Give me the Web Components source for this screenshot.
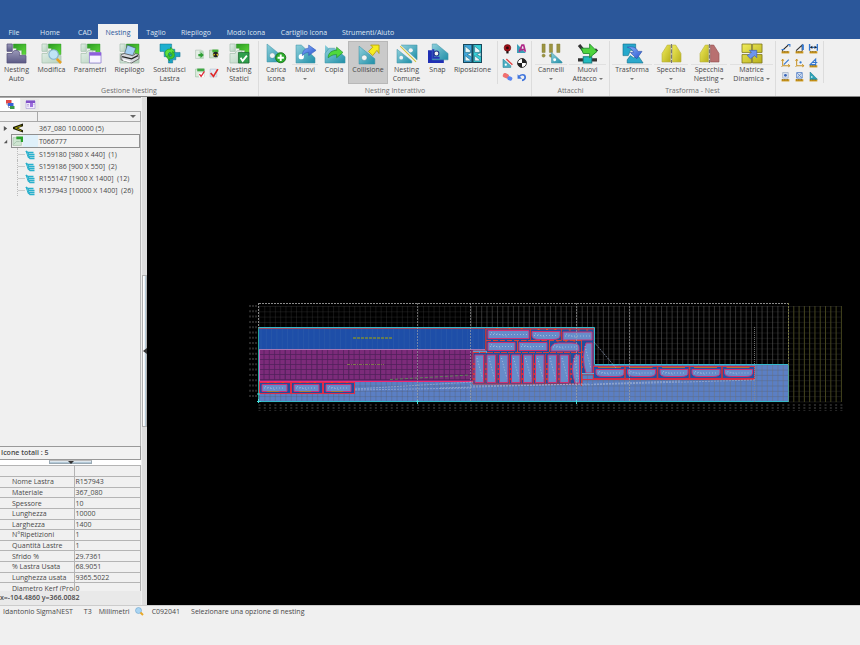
<!DOCTYPE html>
<html lang="it">
<head>
<meta charset="utf-8">
<title>SigmaNEST</title>
<style>
html,body{margin:0;height:100%}
body{font-family:"Open Sans","Noto Sans",sans-serif;font-size:7px;line-height:9px;color:#484848;background:#f0f0f0;overflow:hidden}
</style>
</head>
<body>
<nest-app></nest-app>
<script>
const define=(name,render)=>customElements.define(name,class extends HTMLElement{
  connectedCallback(){
    if(this.shadowRoot)return;
    this.attachShadow({mode:'open'});
    const t=document.createElement('template');
    t.innerHTML='<style>*{box-sizing:border-box}button,select{font:inherit;color:inherit;border:0;background:none;padding:0;margin:0}</style>'+render(this);
    this.shadowRoot.append(t.content.cloneNode(true));
  }
});

const defs=`<defs>
<linearGradient id="g" x1="0" y1="0" x2="1" y2="1"><stop stop-color="#2a9a22"/><stop offset="1" stop-color="#62dc3c"/></linearGradient>
<linearGradient id="t" x1="0" y1="0" x2="1" y2="1"><stop stop-color="#8fd0dc"/><stop offset="1" stop-color="#1f8fa8"/></linearGradient>
<linearGradient id="p" x1="0" y1="0" x2="0" y2="1"><stop stop-color="#9a98b8"/><stop offset="1" stop-color="#5c5a86"/></linearGradient>
<linearGradient id="l" x1="0" y1="0" x2="1" y2="1"><stop stop-color="#e4f0e8"/><stop offset="1" stop-color="#b6d2be"/></linearGradient>
<linearGradient id="y" x1="0" y1="0" x2="1" y2="1"><stop stop-color="#f0ec5c"/><stop offset="1" stop-color="#b8b01c"/></linearGradient>
<linearGradient id="b" x1="0" y1="0" x2="1" y2="1"><stop stop-color="#8ab4ff"/><stop offset="1" stop-color="#2a55cc"/></linearGradient></defs>`;
const plate=(f,s)=>`<path d="M6 0h12v10h-4V6H9V4H6z" fill="url(#g)" stroke="#2c8f26" stroke-width=".4"/><g fill="url(#${f})" stroke="${s}" stroke-width=".7"><path d="M0 0h5v7H0z"/><path d="M0 9h5c0-4 7-4 7 0v2h6v7H0z"/></g>`;
const tri=(x=0,y=0)=>`<g transform="translate(${x} ${y})"><path d="M0 0l15 12v5H0z" fill="url(#t)" stroke="#3d93a6" stroke-width=".5"/><circle cx="5" cy="11" r="2.6" fill="#f4f4f4" stroke="#2a7c90" stroke-width=".4"/></g>`;
const ruler='<path d="M1 13h14v4H1z" fill="#d09a1c"/><path d="M3 13v2M6 13v2M9 13v2M12 13v2" stroke="#3b2c08"/>';
const axes='<path d="M3 2v12h13M1 5l2-3 2 3M13 11l3 3-3 2M3 14l-2 2" fill="none" stroke="#c89224" stroke-width="1.8"/>';
const half='<path d="M0 9l5-8h3v16H0z" fill="url(#y)" stroke="#b9b240" stroke-width=".6"/><path d="M9 0v18" stroke="#777" stroke-width="1.2" stroke-dasharray="4 1"/>';
const icons={
 auto:plate('p','#55527c'),
 modifica:plate('l','#a8c2b0')+'<circle cx="11" cy="10" r="4.5" fill="#bfe4f6" stroke="#83b2cc"/><path d="M14 14l4 4" stroke="#e8a020" stroke-width="2.4"/>',
 parametri:plate('l','#a8c2b0')+'<path d="M8 8h11v10H8z" fill="#f7f4ff" stroke="#8c78d0" stroke-width=".7"/><path d="M8 8h11v3H8z" fill="#8e5fdc"/>',
 riepilogo:plate('l','#a8c2b0')+'<path d="M4 10L7 1l8 3-3 7z" fill="#a4d0f4" stroke="#456" stroke-width=".6"/><path d="M1 10l3-1 8 2 3-2 3 1v4l-7 4-10-3z" fill="#d6d8de" stroke="#555" stroke-width=".8"/><path d="M2 12l9 2 6-3" stroke="#222" fill="none" stroke-width="1.2"/><path d="M3 15l7 2" stroke="#fff" stroke-width="1.5"/>',
 sost:'<path d="M0 0h11v5h3v5H8v2H4V7H0z" fill="#1fb0cf" stroke="#12728c" stroke-width=".5"/><path d="M8 8h11v4h-4v3h-3v3H8z" fill="#1ba2c4" stroke="#12728c" stroke-width=".5"/><path d="M6 12c-3-4 0-8 4-7V3l4 4-4 3V8c-2 0-3 2-1 4z" fill="#5ee03c" stroke="#1d8a1a" stroke-width=".5"/><path d="M12 7c4 3 1 8-3 7v2l-3-4 3-2v2c2 0 3-1 2-3z" fill="#3ec42c" stroke="#1d8a1a" stroke-width=".4"/>',
 statici:plate('l','#a8c2b0')+'<path d="M8 8h10v10H8z" fill="#2f9e4c" stroke="#17662c" stroke-width=".7"/><path d="M10 13l2 3 4-5" fill="none" stroke="#fff" stroke-width="1.7"/>',
 carica:tri()+'<circle cx="13" cy="13" r="4.8" fill="#2cae2c" stroke="#126812" stroke-width=".8"/><path d="M13 10v6M10 13h6" stroke="#fff" stroke-width="1.8"/>',
 muovi:'<path d="M0 1h5l13 12v5H0z" fill="url(#t)" stroke="#3d93a6" stroke-width=".5"/><circle cx="5" cy="12" r="2.5" fill="#fff"/><path d="M6 11c0-5 3-7 6-7V1l7 5-7 5V8c-3 0-4 1-6 3z" fill="url(#b)" stroke="#3760b8" stroke-width=".6"/>',
 copia:'<path d="M0 1l9 8v7H0z" fill="url(#t)"/><path d="M4 4h5l10 8v6H0V9z" fill="url(#t)" stroke="#3d93a6" stroke-width=".5"/><path d="M3 13c0-5 4-7 8-7V3l6 5-6 5v-3c-4 0-5 1-8 3z" fill="#4fd93c" stroke="#1e8c28" stroke-width=".6"/>',
 collisione:tri(0,2)+'<path d="M9 7l4-4-2-2h8v8l-2-3-4 5z" fill="#f6ec20" stroke="#b4a010" stroke-width=".8"/>',
 comune:'<path d="M0 5l14 11v2H0z" fill="url(#t)" stroke="#3d93a6" stroke-width=".5"/><path d="M4 1h15v14z" fill="url(#t)" stroke="#3d93a6" stroke-width=".5"/><path d="M3 2l15 15" stroke="#d2c63a" stroke-width="1"/><circle cx="13" cy="6" r="2" fill="#f4f4f4"/><circle cx="4" cy="13" r="1.8" fill="#f4f4f4"/>',
 snap:'<path d="M0 6h4v6h11v6H0z" fill="#1f2fb4"/><path d="M4 0h4l11 9v6H4z" fill="url(#t)" stroke="#3d93a6" stroke-width=".5"/><path d="M5 5v8h6" fill="none" stroke="#2536b8" stroke-width="2"/><circle cx="8" cy="9" r="2.3" fill="#f4f4f4" stroke="#238"/>',
 riposizione:'<path d="M0 0h18v18H0z" fill="#18485c"/><path d="M1 1h7v16H1z" fill="#40a6dc"/><path d="M10 1h7v16h-7z" fill="#36d0d6"/><path d="M2 2l5 4v2H2zM2 11l5 4v1H2zM11 2l5 4v2h-5zM11 11l5 4v1h-5zM4 10l4-2v4zM13 10l4-2v4z" fill="#eaf8fa" stroke="#1a6c84" stroke-width=".6"/>',
 cannelli:'<g fill="#9c9440" stroke="#7c7630" stroke-width=".4"><path d="M0 0h3v8H0zM7 0h3v8H7zM14 0h3v8h-3z"/><circle cx="1.5" cy="11" r="1.5"/><circle cx="8.5" cy="11" r="1.5"/></g><path d="M9 8l10 9v1H9z" fill="url(#t)" stroke="#3d93a6" stroke-width=".5"/><circle cx="12" cy="15" r="1.4" fill="#fff"/>',
 attacco:'<path d="M1 1l5 6M18 5l-4 4M0 15h5M13 15h5" stroke="#333" stroke-width="3"/><path d="M5 12h8v6H5z" fill="#22bcc0" stroke="#187c80"/><path d="M3 4h8V0l7 7-7 6v-4H5z" fill="#4fd43e" stroke="#1d8a2a" stroke-width=".8"/>',
 trasforma:'<path d="M0 0h12v6H7l-2 5H0z" fill="#25a8cc" stroke="#14708c" stroke-width=".6"/><path d="M4 18v-3l3-4 3 2 5-1 4 6z" fill="#2ba8cc" stroke="#14708c" stroke-width=".6"/><path d="M4 3c7-1 9 1 10 4h4l-5 7-6-6h3c-1-3-3-4-6-5z" fill="url(#b)" stroke="#2d50a8" stroke-width=".6"/>',
 specchia:half+'<path d="M18 9l-5-8h-3v16h8z" fill="url(#y)" stroke="#b9b240" stroke-width=".6"/>',
 spnest:half+'<path d="M18 9l-5-8h-3v16h8z" fill="#b87070" stroke="#935050" stroke-width=".6"/>',
 matrice:'<g fill="url(#y)" stroke="#77701a" stroke-width=".7"><path d="M0 0h9v8H0zM10 0h9v8h-9zM0 10h9v8H0zM10 10h9v8h-9z"/></g><path d="M5 11l4-3-2-2h7v7l-2-2-4 3z" fill="#6d94ee" stroke="#3b5cb8" stroke-width=".6"/>',
 export:'<path d="M1 2h10l4 3v12H1z" fill="#e2ede4" stroke="#a9bcae"/><path d="M8 3h7v14H8z" fill="#b8dabc"/><path d="M6 9h4V6l6 5-6 5v-3H6z" fill="#2f9e34"/>',
 burn:'<path d="M1 2h14v14H1z" fill="#cce3c8" stroke="#8eaa8c"/><path d="M6 1h11v5H6z" fill="#3fae34"/><circle cx="12" cy="10" r="5" fill="#222"/><path d="M8 8l3 2-3 3zM16 8l-3 2 3 3z" fill="#f0da24"/>',
 verify:'<path d="M1 2h15v14H1z" fill="#dcebdd" stroke="#8eb894"/><path d="M4 1h13v5H4z" fill="#40a844"/><path d="M7 9h9v8H7z" fill="#fff"/><path d="M8 11l3 4 6-9" fill="none" stroke="#e02838" stroke-width="2.2"/>',
 check:'<path d="M2 2h12v14H2z" fill="#dfe8f2" stroke="#aab8cc"/><path d="M3 9l5 6 8-13" fill="none" stroke="#e02828" stroke-width="3"/>',
 rosette:'<path d="M8 8v9" stroke="#111" stroke-width="4"/><circle cx="8" cy="7" r="6" fill="#a41018" stroke="#580a0c"/><circle cx="8" cy="7" r="2.5" fill="#2c0808"/>',
 text:'<path d="M0 0v16h16z" fill="#3aa0b8"/><path d="M4 14L9 2h3l3 12M7 10h7" fill="none" stroke="#b02888" stroke-width="3"/>',
 edit:'<path d="M0 2l14 12v3H0z" fill="#4eb0c4" stroke="#237c94"/><circle cx="5" cy="12" r="2" fill="#fff"/><path d="M6 2l11 10" stroke="#e04444" stroke-width="2.5"/>',
 target:'<circle cx="9" cy="9" r="8" fill="#fff" stroke="#222" stroke-width="1.6"/><path d="M9 9V1a8 8 0 018 8zM9 9v8a8 8 0 01-8-8z" fill="#222"/>',
 erase:'<rect x="0" y="3" width="11" height="8" rx="3" fill="#f07070" transform="rotate(25 6 6)"/><rect x="8" y="8" width="9" height="7" rx="3" fill="#5a86f0" transform="rotate(25 12 11)"/>',
 undo:'<path d="M9 15c8-1 7-10 1-10-3 0-4 1-6 3" fill="none" stroke="#3f74dc" stroke-width="3"/><path d="M1 4v8h8z" fill="#3f74dc"/>',
 m1:ruler+'<path d="M2 12L13 2" stroke="#222" stroke-width="2"/><path d="M12 1h4v4M1 10h5" fill="none" stroke="#3478d0" stroke-width="2"/>',
 m2:ruler+'<path d="M2 12L13 2v10" fill="none" stroke="#333" stroke-width="2"/><path d="M12 1h4v10h-3z" fill="#3478d0"/>',
 m3:ruler+'<path d="M1 0v12M15 0v12M2 6h12" stroke="#3478d0" stroke-width="2.4"/><path d="M2 6l4-3v6zM14 6l-4-3v6z" fill="#222"/>',
 m4:axes+'<path d="M5 12L14 3" stroke="#3478d0" stroke-width="2"/>',
 m5:axes+'<circle cx="10" cy="8" r="2" fill="#3478d0"/>',
 m6:ruler+'<path d="M2 12L12 2v10zM7 8h8" fill="none" stroke="#3478d0" stroke-width="2"/>',
 m7:ruler+'<path d="M3 1h10v10H3z" fill="#dde6f2" stroke="#8898b0"/><circle cx="8" cy="6" r="2.5" fill="#3a66b8"/>',
 m8:ruler+'<path d="M3 1h10v10H3zM4 2l8 8M12 2l-8 8" fill="#dde6f2" stroke="#4878c4" stroke-width="1.4"/>',
 m9:ruler+'<path d="M2 0l13 13H2z" fill="#2ba4b8" stroke="#16788c"/><circle cx="5" cy="9" r="1.5" fill="#fff"/>',
 layers:'<path d="M0 0h11v7H0z" fill="#e04848"/><path d="M4 6h11v6H4z" fill="#3a62d8"/><path d="M8 12h9v6H8z" fill="#3c9c4c"/><path d="M2 7v3h2M5 12v3h3" fill="none" stroke="#447"/>',
 form:'<path d="M0 2h18v15H0z" fill="#efeafc" stroke="#9a86d0"/><path d="M0 1h18v5H0z" fill="#8050c8"/><path d="M8 6l6 0v8H8z" fill="#9b6cdc"/><path d="M2 9h4M2 12h4M15 9h2" stroke="#8a70b8"/>',
 material:'<path d="M18 1v5l-9 3 9 4v4L0 11V7z" fill="#1d1d06"/><path d="M15 5L4 9l11 5" fill="none" stroke="#a8a400" stroke-width="1.6"/>',
 task:'<path d="M0 3h15v14H0z" fill="#cfe6d2" stroke="#9ab8a0"/><path d="M6 1h12v10h-4V6H6z" fill="#2ba32c"/><path d="M1 15l5-5h6" stroke="#8fae96" fill="none"/>',
 sheet:'<path d="M1 2l4 3h11M4 6l3 3h11M4 10l3 3h11M6 14l3 3h9" fill="none" stroke="#28b0cc" stroke-width="2.6"/><path d="M1 2l5 14" stroke="#28b0cc" stroke-width="2"/>',
 lens:'<circle cx="7" cy="7" r="6" fill="#a9d4f2" stroke="#5d98c4"/><path d="M11 11l5 5" stroke="#e8a828" stroke-width="4"/>'
};

define('nest-icon',e=>`<style>:host{display:block;width:18px;height:18px;flex:none}svg{display:block;width:100%;height:100%;overflow:visible}</style><svg viewBox="0 0 18 18" aria-hidden="true">${defs}${icons[e.getAttribute('name')]}</svg>`);

define('ribbon-tabs',()=>`<style>:host{display:block;background:#2b579a;color:#dfe7f3;padding-top:24px}
nav{display:flex;height:15px}button{width:var(--w);height:15px;flex:none;line-height:17px;white-space:nowrap}
button[aria-selected=true]{background:#f0f0f0;color:#2b579a}</style>
<nav role="tablist">${[['File',28],['Home',44],['CAD',26],['Nesting',40],['Taglio',36],['Riepilogo',44],['Modo Icona',56],['Cartiglio Icona',60],['Strumenti/Aiuto',68]].map(([t,w])=>`<button role="tab" aria-selected="${t=='Nesting'}" style="--w:${w}px">${t}</button>`).join('')}</nav>`);

define('ribbon-group',e=>`<style>:host{display:flex;flex-direction:column;height:55px;border-right:1px solid #dcdcdc;flex:none}
div{display:flex;flex:1;padding:0 var(--pr,2px) 0 var(--pl,3px)}footer{text-align:center;color:#6e6e6e;line-height:9px;height:11px;padding-top:1px}</style>
<div><slot></slot></div><footer>${e.getAttribute('label')||''}</footer>`);

define('ribbon-button',e=>`<style>:host{display:block;flex:none;height:43px}
button{display:flex;flex-direction:column;align-items:center;width:100%;height:100%;padding-top:2px;border:1px solid transparent;white-space:nowrap;text-align:center;line-height:9px}
:host([pressed]) button{background:#cacaca;border-color:#b8b8b8}
span{padding-top:2px}:host([menu]) span{border-top:1px solid #e0e0e0;margin-top:1px;padding:0 3px}
i{display:inline-block;border:2px solid transparent;border-top-color:#777;border-bottom:0;vertical-align:middle}
nest-icon{width:19px;height:19px}</style>
<button${e.hasAttribute('pressed')?' aria-pressed="true"':''}><nest-icon name="${e.getAttribute('icon')}"></nest-icon><span><slot></slot>${e.getAttribute('menu')=='below'?'<br><i></i>':e.hasAttribute('menu')?' <i></i>':''}</span></button>`);

define('icon-grid',e=>`<style>:host{display:grid;grid-template-columns:repeat(var(--c,2),14px);grid-auto-rows:var(--r,14px);align-content:start;justify-content:center;flex:none;padding-top:1px;height:43px}
button{display:grid;place-items:center}nest-icon{width:10px;height:10px}</style>
${e.getAttribute('names').split(' ').map(n=>`<button aria-label="${n}"><nest-icon name="${n}"></nest-icon></button>`).join('')}`);

const rb=(w,icon,text,attr='')=>`<ribbon-button style="width:${w}px" icon="${icon}" ${attr}>${text}</ribbon-button>`;
define('ribbon-bar',()=>`<style>:host{display:flex;height:58px;padding-top:2px;background:#f0f0f0;border-bottom:1px solid #858585}
.first{--pl:0px;--pr:3px}.lined{border:solid #dcdcdc;border-width:0 0 0 1px;width:34px;margin-left:2px}.measure{height:42px;border-right:1px solid #dcdcdc;padding-left:3px;padding-right:2px}</style>
<ribbon-group class="first" label="Gestione Nesting">${rb(33,'auto','Nesting<br>Auto')}${rb(37,'modifica','Modifica')}${rb(40,'parametri','Parametri')}${rb(39,'riepilogo','Riepilogo')}${rb(41,'sost','Sostituisci<br>Lastra')}<icon-grid style="width:33px;padding-top:3px;--r:19px" names="export burn verify check"></icon-grid>${rb(32,'statici','Nesting<br>Statici')}</ribbon-group>
<ribbon-group style="--pr:0px" label="Nesting Interattivo">${rb(28,'carica','Carica<br>Icona')}${rb(30,'muovi','Muovi','menu="below"')}${rb(28,'copia','Copia')}${rb(40,'collisione','Collisione','pressed')}${rb(37,'comune','Nesting<br>Comune')}${rb(25,'snap','Snap')}${rb(45,'riposizione','Riposizione')}<icon-grid class="lined" names="rosette text edit target erase undo"></icon-grid></ribbon-group>
<ribbon-group style="--pl:2px" label="Attacchi">${rb(34,'cannelli','Cannelli','menu="below"')}${rb(39,'attacco','Muovi<br>Attacco','menu')}</ribbon-group>
<ribbon-group style="--pl:0px" label="Trasforma - Nest">${rb(44,'trasforma','Trasforma','menu="below"')}${rb(34,'specchia','Specchia','menu="below"')}${rb(42,'spnest','Specchia<br>Nesting','menu')}${rb(43,'matrice','Matrice<br>Dinamica','menu')}</ribbon-group>
<icon-grid class="measure" style="--c:3" names="m1 m2 m3 m4 m5 m6 m7 m8 m9"></icon-grid>`);

define('tree-row',e=>`<style>:host{display:flex;align-items:center;height:12px;white-space:nowrap}
.tw{width:11px;height:9px;display:grid;place-items:center}.tw svg{width:5px;height:5px}
.cell{display:flex;align-items:center;flex:1;height:12px}nest-icon{width:10px;height:10px;margin:0 2px 0 2px}
.lead{width:26px;display:flex}.leaf .lead{padding-left:14px}.leaf nest-icon{margin:0;height:9px}.branch{width:8px;height:12px;border-left:1px dotted #bbb;margin-left:6px;margin-right:-14px;background:linear-gradient(#ccc,#ccc) 0 6px/8px 1px no-repeat}
:host([selected]){height:14px}:host([selected]) .cell{height:12px;outline:1px solid #8f8f8f;background:linear-gradient(90deg,#f0f0f0 11px,#dff0fa 11px,#dff0fa 26px,#f3f3f3 26px);margin-left:1px;margin-right:1px}:host([selected]) .lead{margin-left:-1px}</style>
${e.hasAttribute('leaf')?'<span class="tw"></span>':`<button class="tw" aria-label="Espandi"><svg viewBox="0 0 6 6"><path d="${e.hasAttribute('selected')?'M5 1v4H1z':'M1 0l4 3-4 3z'}" fill="#555"/></svg></button>`}
<span class="cell ${e.hasAttribute('leaf')?'leaf':''}">${e.hasAttribute('leaf')?'<span class="branch"></span>':''}<span class="lead"><nest-icon name="${e.getAttribute('icon')}"></nest-icon></span><span style="padding-left:2px"><slot></slot></span></span>`);

define('task-tree',()=>`<style>:host{display:flex;flex-direction:column;flex:1;min-height:0}
.tabs{display:flex;height:14px;border-top:1px solid #aaa}.tabs button{width:20px;display:grid;place-items:center;background:#e9e9e9}.tabs button:first-child{background:#fff}.tabs button+button{border:1px solid #eee}nest-icon{width:9px;height:9px}
.filter{display:flex;height:11px;border:1px solid #a9a9a9;border-width:1px 1px 1px 0}.filter span{width:38px;border-right:1px solid #a9a9a9}
.pick{flex:1;display:flex;position:relative;align-items:center}.pick select{appearance:none;width:100%;height:9px}.pick:after{content:"";position:absolute;right:4px;border:3px solid transparent;border-top-color:#666;border-bottom:0}
.rows{flex:1;border-right:1px solid #b9b9b9}</style>
<div class="tabs" role="tablist"><button role="tab" aria-label="Livelli"><nest-icon name="layers"></nest-icon></button><button role="tab" aria-label="Schede"><nest-icon name="form"></nest-icon></button></div>
<div class="filter"><span></span><div class="pick"><select aria-label="Filtro"><option></option></select></div></div>
<div class="rows"><tree-row icon="material">367_080 10.0000 (5)</tree-row><tree-row selected icon="task">T066777</tree-row>
${['S159180 [980 X 440] &nbsp;(1)','S159186 [900 X 550] &nbsp;(2)','R155147 [1900 X 1400] &nbsp;(12)','R157943 [10000 X 1400] &nbsp;(26)'].map(t=>`<tree-row leaf icon="sheet">${t}</tree-row>`).join('')}</div>`);

define('sheet-properties',()=>`<style>:host{display:block}
.total{height:14px;border:1px solid #999;border-left:0;font-weight:600;padding:1px;background:#f2f2f2}
.grip{display:grid;justify-content:center;height:5px;background:#fff}.grip button{width:43px;height:4px;display:grid;place-items:center;background:linear-gradient(#f4f8fc,#9db8ca);border:1px solid #99a9b4;border-top-color:#bbb}.grip svg{width:6px;height:4px;overflow:visible}
.scroll{height:126px;overflow:hidden}table{table-layout:fixed;border-collapse:collapse;width:100%;height:129px}
tr:first-child{height:11px}th,td{font-weight:400;text-align:left;padding:0 0 0 1px;border:1px solid #b4b4b4;border-left:0;line-height:9px;white-space:nowrap;overflow:hidden}th{width:74px;padding-left:12px}
output{display:block;height:14px;padding-top:2px;font-weight:600;background:#e9e9e9}</style>
<div class="total">Icone totali : 5</div><div class="grip"><button aria-label="Riduci"><svg viewBox="0 0 6 4"><path d="M0 0l3 3 3-3z" fill="#333"/></svg></button></div>
<div class="scroll"><table><tbody><tr><th></th><td></td></tr>${[['Nome Lastra','R157943'],['Materiale','367_080'],['Spessore','10'],['Lunghezza','10000'],['Larghezza','1400'],['N°Ripetizioni','1'],['Quantità Lastre','1'],['Sfrido %','29.7361'],['% Lastra Usata','68.9051'],['Lunghezza usata','9365.5022'],['Diametro Kerf (Proc','0']].map(([a,b])=>`<tr><th scope="row">${a}</th><td>${b}</td></tr>`).join('')}</tbody></table></div>
<output>x=-104.4860 y=366.0082</output>`);

define('pane-splitter',()=>`<style>:host{display:flex;align-items:center;background:#dedede;width:6px;flex:none;border-left:1px solid #efefef}
button{width:5px;height:152px;display:grid;place-items:center;border:1px solid #b0b0b0;background:linear-gradient(90deg,#fff 40%,#9db8ca)}svg{width:4px;height:6px}</style>
<button aria-label="Comprimi pannello"><svg viewBox="0 0 4 6"><path d="M4 0v6L0 3z" fill="#333"/></svg></button>`);

/* Nest drawing, in window units: sheet from x=259 to x=788, grid pitch 5.3 */
function drawing(){
  let o='';
  const R=(x,y,w,h,f,a='')=>o+=`<rect x="${x}" y="${y}" width="${w}" height="${h}" fill="${f}" ${a}/>`;
  const L=(x1,y1,x2,y2,c,a='')=>o+=`<path d="M${x1} ${y1}L${x2} ${y2}" stroke="${c}" fill="none" ${a}/>`;
  const P=(d,a='')=>o+=`<path d="${d}" ${a}/>`;
  P('M259 328H594V365H788V402H259z','fill="#5b7fc4"');
  for(let k=0;k<19;k++)L(259,306.5+k*5.3,841,306.5+k*5.3,'#555','stroke-opacity=".25"');
  for(let k=0;k<=110;k++){const x=259.5+k*5.29;L(x,306,x,402,x>789?'#4c4c22':x>470?'#707070':'#555',`stroke-opacity="${x>789?.9:x>470?.45:.25}"`);
    L(x,404,x,411,'#777','stroke-dasharray="2 1" stroke-opacity=".32" stroke-width="2"');}
  for(let k=0;k<18;k++)L(249,306+k*5.3,257,306+k*5.3,'#777','stroke-dasharray="2 1" stroke-opacity=".35" stroke-width="2"');
  R(259,328,226,21,'#1e4ea8');
  for(let k=0;k<43;k++)L(261+k*5.3,328,261+k*5.3,349,'#456fae','stroke-opacity=".25"');
  R(259,350,214,31,'#7c2b7a');
  for(let k=0;k<40;k++)L(264+k*5.3,350,264+k*5.3,380,'#4d2058',`stroke-opacity="${k%6==4?1:.7}"`);
  for(let k=0;k<6;k++)L(259,354.5+k*5,473,354.5+k*5,'#4d2058','stroke-opacity=".7"');
  L(259,349.5,485,349.5,'#a476b4');L(259.5,350,259.5,381,'#cf58bd');L(259,381.5,473,381.5,'#f02a72');
  L(259,328.5,594,328.5,'#9c4a60');L(485.5,328,485.5,350,'#a03c3a');
  L(353,338,392,338,'#7c8c38','stroke-width="1.4" stroke-dasharray="3 1"');L(347,364.5,384,364.5,'#7c7550','stroke-dasharray="3 1 1 1"');
  P('M486 329H594V374H582V384H473V351H486z','fill="#214f9e" stroke="#c43648"');
  R(473,351,14,2,'#5b9ed0');
  const part=(x,y,w,h,s)=>{
    const r=Math.min(w/3,7);
    const d=s=='d'?`M${x} ${y}H${x+w}V${y+h/2}Q${x+w} ${y+h} ${x+w-r} ${y+h}H${x+r}Q${x} ${y+h} ${x} ${y+h/2}z`:
     s=='u'?`M${x} ${y+h}V${y+h/2}Q${x+2} ${y} ${x+r} ${y}H${x+w-r}Q${x+w} ${y} ${x+w} ${y+h/2}V${y+h}z`:
     s=='l'?`M${x+w} ${y}H${x+3}Q${x-2} ${y+h/2} ${x+3} ${y+h}H${x+w}z`:`M${x} ${y}h${w}v${h}h${-w}z`;
    P(d,'fill="#668cca" stroke="#cf3074"');
    if(w>h){L(x+2,y+h/2,x+w-2,y+h/2,'#b7c7e4','stroke-dasharray="1 2" stroke-opacity=".7"');
      L(x+3,y+2,x+w/2,y+h-2,'#c1cce2','stroke-dasharray="1 2" stroke-opacity=".6"');
      for(let k=.2;k<1;k+=.3)L(x+w*k,y-2,x+w*k+2,y-2,'#ef4a1c');
    }else{L(x+2,y+3,x+w-1,y+h-4,'#bcc8e2','stroke-dasharray="1 2" stroke-opacity=".8"');
      for(let k=9;k<h-3;k+=5)L(x-2,y+k,x,y+k,'#ec3430','stroke-width="1.6"');}
  };
  for(const x of[259,291,323]){R(x+.5,382.5,31,11,'#224c9b','stroke="#e02c48"');part(x+3,384.5,25,7);L(x+8,391.5,x+20,391.5,'#b07834');}
  part(488,330.5,41,8);part(532,331.5,28,8,'d');part(563,332,29,8,'r');
  L(486,340.5,582,340.5,'#d84436','stroke-dasharray="5 2"');
  part(488,342.5,27,8);part(519,342.5,28,8);part(551,343,28,8,'u');
  L(473,352.5,582,352.5,'#dc3e3a','stroke-dasharray="6 1"');
  for(const x of[475,487,499.5,511.5,523.5,535.5,548,560]){part(x,355,8.5,27.5);L(x+10,354,x+10,384,'#bf303d');}
  part(572,355,7.5,28,'l');part(583,343,9,30,'l');
  L(530.5,329,530.5,341,'#c43a32');L(561.5,329,561.5,341,'#c43a32');L(517.5,341,517.5,352,'#d24338');L(549.5,341,549.5,352,'#d24338');L(581.5,341,581.5,386,'#d93c36');
  R(593.5,366.5,161,12,'#2351a5','stroke="#d03046"');
  for(const x of[596,627.5,660,692,724.5]){part(x,369.5,28,7,'d');if(x>600)L(x-2.5,366,x-2.5,379,'#d03236','stroke-width="1.6"');L(x+2,367.5,x+25,367.5,'#b17034');}
  L(582,373.5,594,373.5,'#66a9d0');L(582,379.5,755,379.5,'#d8304c');
  P('M259 327.5H594.5V364.5H788.5','fill="none" stroke="#35b8cc"');P('M788.5 365V402','fill="none" stroke="#4f9e90"');L(259,401.5,788,401.5,'#35b8c8');L(258.5,327,258.5,402,'#2aa69b');
  const dash='stroke-dasharray="2 1"';
  L(259,303.5,788,303.5,'#8a8a8a',dash);L(258.5,303,258.5,328,'#888',dash);
  for(const x of[417.5,470.5,576.5,629.5])L(x,303,x,402,'#aaa','stroke-dasharray="2 1" stroke-opacity=".6"');
  L(788.5,303,788.5,365,'#777744',dash);L(754.5,327,754.5,402,'#888','stroke-dasharray="1 1" stroke-opacity=".8"');
  for(const [a,b,c,d]of[[355,389,473,382],[355,390,470,388],[440,388,582,384],[470,386,590,384],[594,342,616,368],[582,385,755,380],[594,384,680,381]])L(a,b,c,d,'#a9b9d8','stroke-dasharray="2 1" stroke-opacity=".6"');
  L(390,379.5,470,375,'#599554','stroke-dasharray="3 2" stroke-opacity=".8"');
  P('M257 401.5h4M258.5 399v4M416 401.5h3M417.5 400v4M576.5 400v4M257 394h3','stroke="#45e0dc"');
  return o;
}
define('nest-canvas',()=>`<style>:host{display:block;flex:1;min-width:0;background:#000}svg{display:block;width:100%;height:100%}</style><svg viewBox="147 97 713 508" role="img" aria-label="Nesting della lastra">${drawing()}</svg>`);

define('status-bar',()=>`<style>:host{display:flex;align-items:start;gap:11px;height:40px;padding:1px 3px 0;border-top:1px solid #ccc;background:#f0f0f0;white-space:nowrap;line-height:9px}nest-icon{width:9px;height:9px}.unit{display:flex;gap:5px;margin-left:-4px}.code{margin-left:-3px}</style>
<span>Idantonio SigmaNEST</span><span>T3</span><span class="unit">Millimetri <nest-icon name="lens"></nest-icon></span><span class="code">C092041</span><span>Selezionare una opzione di nesting</span>`);

define('nest-app',()=>`<style>:host{display:flex;flex-direction:column;height:100vh}main{flex:1;display:flex;min-height:0}aside{width:141px;flex:none;display:flex;flex-direction:column}</style>
<ribbon-tabs></ribbon-tabs><ribbon-bar></ribbon-bar>
<main><aside><task-tree></task-tree><sheet-properties></sheet-properties></aside><pane-splitter></pane-splitter><nest-canvas></nest-canvas></main>
<status-bar></status-bar>`);
</script>
</body>
</html>
